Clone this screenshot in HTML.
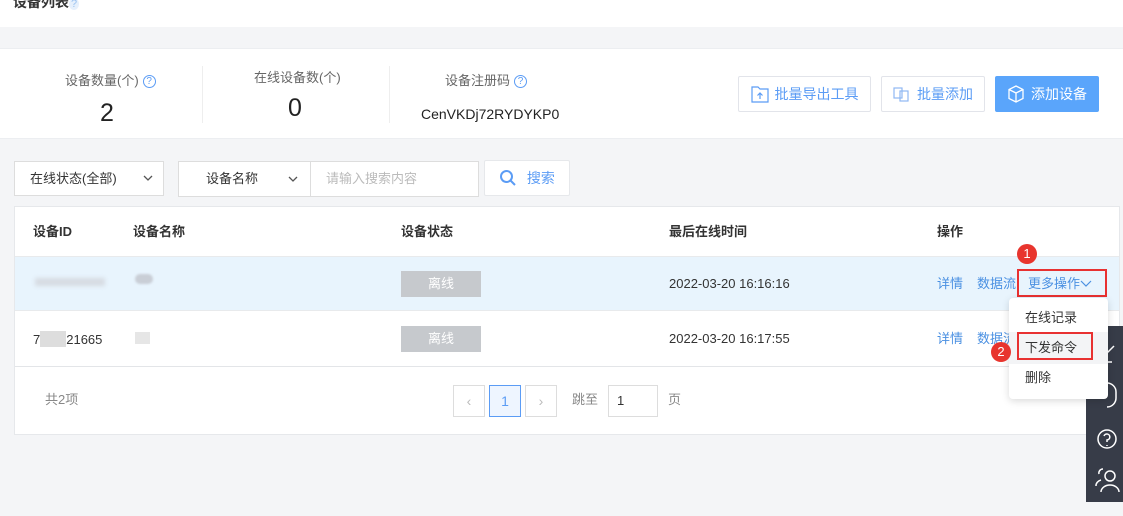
<!DOCTYPE html>
<html><head><meta charset="utf-8"><style>
*{box-sizing:border-box;margin:0;padding:0}
body{width:1123px;height:516px;overflow:hidden;background:#f4f5f7;font-family:"Liberation Sans","Noto Sans CJK SC",sans-serif;font-size:13px;color:#333;position:relative;line-height:16px}
.abs{position:absolute}
.blue{color:#4a90e2}
.btn{position:absolute;border:1px solid #e2e4ea;background:#fff;border-radius:2px;color:#5b9cf5;font-size:14px;display:flex;align-items:center;justify-content:center;gap:6px}
.sel{position:absolute;background:#fff;border:1px solid #ddd;font-size:13px;display:flex;align-items:center}
.q{display:inline-block;width:13px;height:13px;border:1px solid #5b9cf5;border-radius:50%;color:#5b9cf5;font-size:10px;line-height:11px;text-align:center;vertical-align:1px;margin-left:4px}
.tag{position:absolute;width:80px;height:26px;background:#c6c9cd;color:#fff;font-size:13px;text-align:center;line-height:26px}
.pg{position:absolute;width:32px;height:32px;border:1px solid #ddd;background:#fff;color:#bbb;text-align:center;line-height:30px;font-size:14px}
.badge{position:absolute;width:20px;height:20px;border-radius:50%;background:#e8352e;color:#fff;font-size:13px;text-align:center;line-height:20px}
.th{position:absolute;top:224px;font-weight:bold;font-size:13px;color:#333}
</style></head><body>
<div class="abs" style="left:0;top:0;width:1123px;height:27px;background:#fff"></div>
<div class="abs" style="left:13px;top:-6px;font-size:14px;font-weight:bold;color:#333">设备列表<span style="color:#9cc3f0;font-weight:normal;background:#e6f0fc;border-radius:50%;font-size:11px;padding:0 2px">?</span></div>

<div class="abs" style="left:0;top:48px;width:1123px;height:91px;background:#fff;border-top:1px solid #eceef1;border-bottom:1px solid #eceef1"></div>
<div class="abs" style="left:202px;top:66px;width:1px;height:57px;background:#eee"></div>
<div class="abs" style="left:389px;top:66px;width:1px;height:57px;background:#eee"></div>
<div class="abs" style="left:65px;top:73px;color:#666;font-size:13px">设备数量(个)<span class="q">?</span></div>
<div class="abs" style="left:100px;top:100px;font-size:25px;line-height:26px;color:#222">2</div>
<div class="abs" style="left:254px;top:70px;color:#666;font-size:13px">在线设备数(个)</div>
<div class="abs" style="left:288px;top:95px;font-size:25px;line-height:26px;color:#222">0</div>
<div class="abs" style="left:445px;top:73px;color:#666;font-size:13px">设备注册码<span class="q">?</span></div>
<div class="abs" style="left:421px;top:106px;font-size:14px;color:#222">CenVKDj72RYDYKP0</div>

<div class="btn" style="left:738px;top:76px;width:133px;height:36px"><svg width="18" height="18" viewBox="0 0 18 18" fill="none" stroke="#5b9cf5" stroke-width="1.2"><path d="M1 2h6l2 2h8v13H1z"/><path d="M9 14V8M6.5 10.5L9 8l2.5 2.5"/></svg>批量导出工具</div>
<div class="btn" style="left:881px;top:76px;width:104px;height:36px"><svg width="18" height="18" viewBox="0 0 18 18" fill="none" stroke="#8fb8f2" stroke-width="1.2"><rect x="1" y="3" width="8" height="10"/><rect x="7" y="6" width="8" height="10"/></svg>批量添加</div>
<div class="btn" style="left:995px;top:76px;width:104px;height:36px;background:#5aa5fb;border-color:#5aa5fb;color:#fff"><svg width="18" height="18" viewBox="0 0 18 18" fill="none" stroke="#fff" stroke-width="1.3"><path d="M9 1l7 3.5v9L9 17l-7-3.5v-9z M2 4.5L9 8l7-3.5 M9 8v9"/></svg>添加设备</div>

<div class="sel" style="left:14px;top:161px;width:150px;height:35px;padding-left:15px">在线状态(全部)<svg class="abs" style="right:10px;top:13px" width="10" height="7" viewBox="0 0 10 7" fill="none" stroke="#555" stroke-width="1.3"><path d="M1 1l4 4 4-4"/></svg></div>
<div class="sel" style="left:178px;top:161px;width:133px;height:36px;padding-left:27px">设备名称<svg class="abs" style="right:12px;top:14px" width="10" height="7" viewBox="0 0 10 7" fill="none" stroke="#555" stroke-width="1.3"><path d="M1 1l4 4 4-4"/></svg></div>
<div class="sel" style="left:310px;top:161px;width:169px;height:36px;padding-left:15px;color:#bbb">请输入搜索内容</div>
<div class="btn" style="left:484px;top:160px;width:86px;height:36px;font-size:14px;border-color:#e6e8eb"><svg width="18" height="18" viewBox="0 0 18 18" fill="none" stroke="#5b9cf5" stroke-width="2"><circle cx="7.5" cy="7.5" r="5.5"/><path d="M11.5 11.5L16 16"/></svg>&nbsp;搜索</div>

<div class="abs" style="left:14px;top:206px;width:1106px;height:229px;background:#fff;border:1px solid #e6e8eb"></div>
<div class="abs" style="left:15px;top:256px;width:1104px;height:55px;background:#e8f4fd;border-top:1px solid #e8eaec;border-bottom:1px solid #e8eaec"></div>
<div class="abs" style="left:15px;top:366px;width:1104px;height:1px;background:#e3e5e8"></div>
<div class="th" style="left:33px">设备ID</div>
<div class="th" style="left:133px">设备名称</div>
<div class="th" style="left:401px">设备状态</div>
<div class="th" style="left:669px">最后在线时间</div>
<div class="th" style="left:937px">操作</div>

<div class="abs" style="left:35px;top:278px;width:70px;height:8px;background:#d6dbe2;filter:blur(2px)"></div>
<div class="abs" style="left:135px;top:274px;width:18px;height:10px;background:#c9ced6;border-radius:8px;filter:blur(1px)"></div>
<div class="tag" style="left:401px;top:271px">离线</div>
<div class="abs" style="left:669px;top:276px">2022-03-20 16:16:16</div>
<div class="abs blue" style="left:937px;top:276px">详情</div>
<div class="abs blue" style="left:977px;top:276px">数据流</div>
<div class="abs blue" style="left:1028px;top:276px">更多操作</div>
<svg class="abs" style="left:1080px;top:280px" width="12" height="8" viewBox="0 0 12 8" fill="none" stroke="#4a90e2" stroke-width="1.2"><path d="M1 1l5 5 5-5"/></svg>
<div class="abs" style="left:1017px;top:269px;width:90px;height:28px;border:2px solid #e83131"></div>
<div class="badge" style="left:1017px;top:244px">1</div>

<div class="abs" style="left:33px;top:331px;font-size:13px">7<span style="display:inline-block;width:26px;height:16px;background:#ddd;vertical-align:-3px"></span>21665</div>
<div class="abs" style="left:135px;top:332px;width:15px;height:12px;background:#e6e6e6"></div>
<div class="tag" style="left:401px;top:326px">离线</div>
<div class="abs" style="left:669px;top:331px">2022-03-20 16:17:55</div>
<div class="abs blue" style="left:937px;top:331px">详情</div>
<div class="abs blue" style="left:977px;top:331px">数据流</div>

<div class="abs" style="left:45px;top:392px;color:#888">共2项</div>
<div class="pg" style="left:453px;top:385px">&#8249;</div>
<div class="pg" style="left:489px;top:385px;border-color:#5b9cf5;background:#eef5ff;color:#5b9cf5">1</div>
<div class="pg" style="left:525px;top:385px">&#8250;</div>
<div class="abs" style="left:572px;top:392px;color:#888">跳至</div>
<div class="abs" style="left:608px;top:385px;width:50px;height:32px;border:1px solid #ddd;background:#fff;padding:7px 8px;font-size:13px">1</div>
<div class="abs" style="left:668px;top:392px;color:#888">页</div>

<div class="abs" style="left:1086px;top:326px;width:37px;height:176px;background:#373c48"></div>
<svg class="abs" style="left:1086px;top:326px" width="37" height="176" viewBox="0 0 37 176" fill="none" stroke="#fff" stroke-width="1.5"><path d="M14 34L28 20M12 36h14"/><path d="M12 66a9 9 0 0 1 18 0v6a9 9 0 0 1-9 9"/><circle cx="21" cy="113" r="9"/><path d="M18 110a3 3 0 1 1 3 4v2M21 119v1"/><circle cx="24" cy="150" r="5"/><path d="M15 166a9 7 0 0 1 18 0M13 148a4 4 0 0 1 4-5M10 160a7 6 0 0 1 5-6"/></svg>

<div class="abs" style="left:1009px;top:298px;width:99px;height:101px;background:#fff;border-radius:4px;box-shadow:0 2px 8px rgba(0,0,0,.15)"></div>
<div class="abs" style="left:1009px;top:332px;width:99px;height:32px;background:#f3f4f6"></div>
<div class="abs" style="left:1025px;top:310px">在线记录</div>
<div class="abs" style="left:1025px;top:340px">下发命令</div>
<div class="abs" style="left:1025px;top:370px">删除</div>
<div class="abs" style="left:1017px;top:332px;width:76px;height:28px;border:2px solid #e83131"></div>
<div class="badge" style="left:991px;top:342px">2</div>
</body></html>
